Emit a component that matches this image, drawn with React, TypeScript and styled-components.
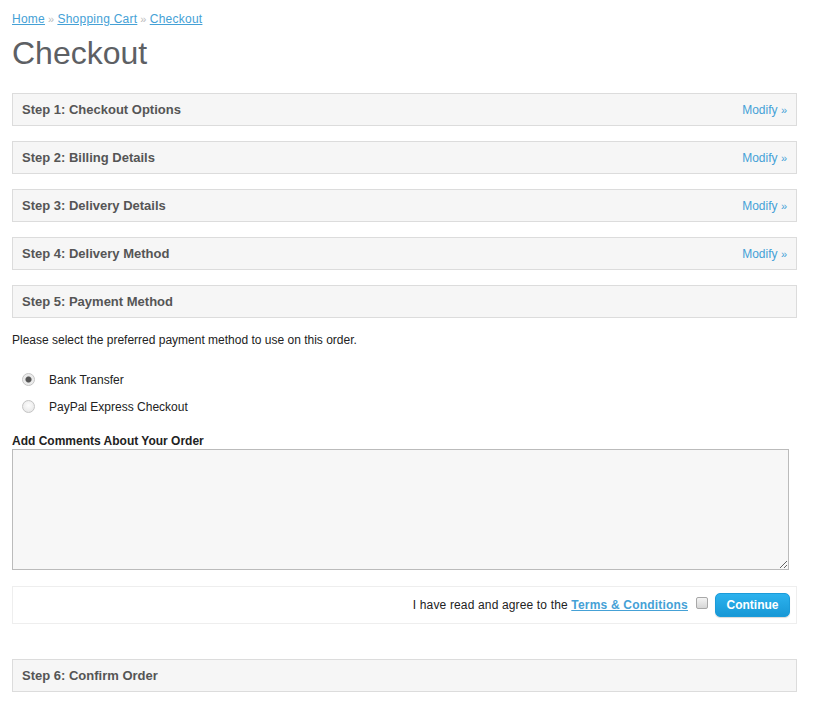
import styled, { createGlobalStyle } from 'styled-components';

const GlobalStyle = createGlobalStyle`
    body {
        margin: 0;
        background: #fff;
        font-family: "Liberation Sans", Arial, sans-serif;
        font-size: 12px;
        color: #222;
    }
`

const Page = styled.div`
    padding: 11px 34px 20px 12px;
`

const Breadcrumb = styled.div`
    font-size: 12px;
    line-height: 16px;
    color: #bbb;
    letter-spacing: 0.25px;
    a {
        color: #45a1d6;
        text-decoration: underline;
    }
    span {
        margin: 0 3px;
        font-size: 11px;
    }
`

const Title = styled.h1`
    margin: 7px 0 21px;
    font-size: 32px;
    font-weight: normal;
    line-height: 38px;
    color: #5d6064;
`

const Panel = styled.div`
    display: flex;
    align-items: center;
    justify-content: space-between;
    height: 31px;
    padding: 0 9px;
    margin-bottom: 15px;
    background: #f6f6f6;
    border: 1px solid #dcdcdc;
`

const PanelTitle = styled.div`
    font-size: 13px;
    font-weight: bold;
    color: #555;
`

const ModifyLink = styled.a`
    font-size: 12px;
    color: #45a1d6;
    text-decoration: none;
    span {
        font-size: 11px;
    }
`

const Intro = styled.p`
    margin: 14px 0 18px;
    font-size: 12px;
    line-height: 15px;
`

const RadioRow = styled.label`
    display: flex;
    align-items: center;
    gap: 14px;
    height: 27px;
    padding-left: 10px;
    font-size: 12px;
`

const Radio = styled.input`
    appearance: none;
    box-sizing: border-box;
    margin: 0;
    width: 13px;
    height: 13px;
    border-radius: 50%;
    border: 1px solid #c4c4c4;
    background: radial-gradient(circle at 50% 40%, #fdfdfd, #e3e3e3);
    &:checked {
        background: radial-gradient(circle, #555 0 2.5px, #9a9a9a 3px, #e8e8e8 3.5px, #f4f4f4);
    }
`

const CommentsLabel = styled.div`
    margin-top: 14px;
    font-size: 12px;
    font-weight: bold;
    line-height: 15px;
`

const Comments = styled.textarea`
    display: block;
    box-sizing: border-box;
    width: 777px;
    height: 121px;
    margin: 0 0 16px;
    background: #f7f7f7;
    border: 1px solid #bbb;
`

const AgreeBar = styled.div`
    display: flex;
    align-items: center;
    justify-content: flex-end;
    height: 36px;
    padding: 0 6px;
    margin-bottom: 35px;
    border: 1px solid #eee;
    font-size: 12px;
    a {
        color: #45a1d6;
        font-weight: bold;
        text-decoration: underline;
        letter-spacing: 0.2px;
    }
`

const AgreeText = styled.span`
    letter-spacing: 0.15px;
`

const AgreeCheck = styled.input`
    appearance: none;
    box-sizing: border-box;
    margin: 0 7px 4px 8px;
    width: 12px;
    height: 12px;
    border-radius: 2px;
    border: 1px solid #a8a8a8;
    background: linear-gradient(#f4f4f4, #d6d6d6);
`

const ContinueButton = styled.button`
    height: 24px;
    width: 75px;
    padding: 0;
    border: 1px solid #1b9bd9;
    border-radius: 5px;
    background: linear-gradient(#2cb2ee, #1898d6);
    box-shadow: 0 1px 1px rgba(0, 0, 0, 0.15);
    color: #fff;
    font-family: "Liberation Sans", Arial, sans-serif;
    font-size: 12px;
    font-weight: bold;
    cursor: pointer;
`

const steps = [
    { title: 'Step 1: Checkout Options', modify: true },
    { title: 'Step 2: Billing Details', modify: true },
    { title: 'Step 3: Delivery Details', modify: true },
    { title: 'Step 4: Delivery Method', modify: true },
    { title: 'Step 5: Payment Method', modify: false },
]

export default function App() {
    return (
        <>
            <GlobalStyle />
            <Page>
                <Breadcrumb>
                    <a href="#">Home</a><span>»</span><a href="#">Shopping Cart</a><span>»</span><a href="#">Checkout</a>
                </Breadcrumb>
                <Title>Checkout</Title>
                {steps.map(s => (
                    <Panel key={s.title}>
                        <PanelTitle>{s.title}</PanelTitle>
                        {s.modify && <ModifyLink href="#">Modify <span>»</span></ModifyLink>}
                    </Panel>
                ))}
                <Intro>Please select the preferred payment method to use on this order.</Intro>
                <RadioRow><Radio type="radio" name="pay" defaultChecked />Bank Transfer</RadioRow>
                <RadioRow><Radio type="radio" name="pay" />PayPal Express Checkout</RadioRow>
                <CommentsLabel>Add Comments About Your Order</CommentsLabel>
                <Comments />
                <AgreeBar>
                    <AgreeText>I have read and agree to the <a href="#">Terms &amp; Conditions</a></AgreeText>
                    <AgreeCheck type="checkbox" />
                    <ContinueButton>Continue</ContinueButton>
                </AgreeBar>
                <Panel>
                    <PanelTitle>Step 6: Confirm Order</PanelTitle>
                </Panel>
            </Page>
        </>
    )
}
